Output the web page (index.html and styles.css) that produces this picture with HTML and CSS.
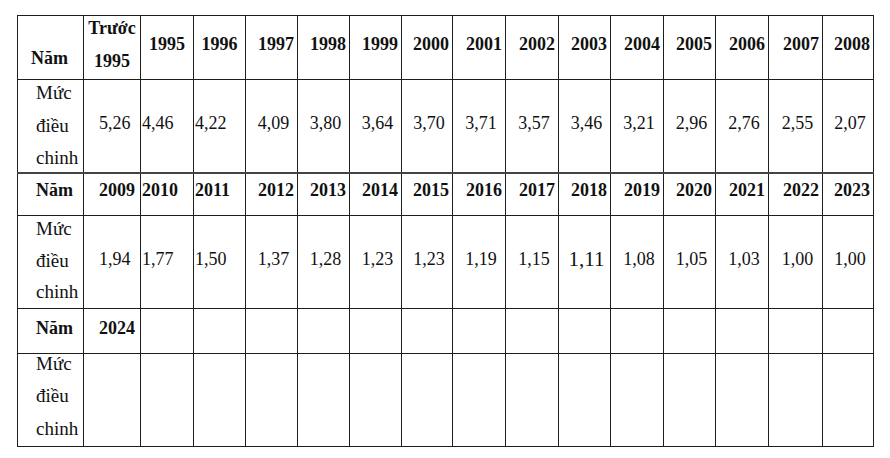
FILE: index.html
```html
<!DOCTYPE html>
<html lang="vi">
<head>
<meta charset="utf-8">
<title>Mức điều chỉnh</title>
<link rel="stylesheet" href="styles.css">
</head>
<body>
<table class="grid">
  <colgroup>
    <col class="w66"><col class="w57"><col class="w53"><col class="w52"><col class="w52"><col class="w52"><col class="w52"><col class="w51"><col class="w53"><col class="w53"><col class="w52"><col class="w53"><col class="w52"><col class="w53"><col class="w54"><col class="w51">
  </colgroup>
  <tr class="row-h1">
    <th class="label first-label">Năm</th>
    <th class="two-line"><div class="stack">Trước<br>1995</div></th>
    <th class="yr ctr">1995</th>
    <th class="yr ctr">1996</th>
    <th class="yr">1997</th>
    <th class="yr">1998</th>
    <th class="yr">1999</th>
    <th class="yr">2000</th>
    <th class="yr">2001</th>
    <th class="yr">2002</th>
    <th class="yr">2003</th>
    <th class="yr">2004</th>
    <th class="yr">2005</th>
    <th class="yr">2006</th>
    <th class="yr">2007</th>
    <th class="yr">2008</th>
  </tr>
  <tr class="row-v1">
    <td class="label"><div class="lines">Mức<br>điều<br>chinh</div></td>
    <td class="val pl15">5,26</td>
    <td class="val lft">4,46</td>
    <td class="val lft">4,22</td>
    <td class="val">4,09</td>
    <td class="val">3,80</td>
    <td class="val">3,64</td>
    <td class="val">3,70</td>
    <td class="val">3,71</td>
    <td class="val">3,57</td>
    <td class="val">3,46</td>
    <td class="val">3,21</td>
    <td class="val">2,96</td>
    <td class="val">2,76</td>
    <td class="val">2,55</td>
    <td class="val">2,07</td>
  </tr>
  <tr class="row-h2">
    <th class="label">Năm</th>
    <th class="yr pl15">2009</th>
    <th class="yr lft">2010</th>
    <th class="yr lft">2011</th>
    <th class="yr">2012</th>
    <th class="yr">2013</th>
    <th class="yr">2014</th>
    <th class="yr">2015</th>
    <th class="yr">2016</th>
    <th class="yr">2017</th>
    <th class="yr">2018</th>
    <th class="yr">2019</th>
    <th class="yr">2020</th>
    <th class="yr">2021</th>
    <th class="yr">2022</th>
    <th class="yr">2023</th>
  </tr>
  <tr class="row-v2">
    <td class="label"><div class="lines">Mức<br>điều<br>chinh</div></td>
    <td class="val pl15">1,94</td>
    <td class="val lft">1,77</td>
    <td class="val lft">1,50</td>
    <td class="val">1,37</td>
    <td class="val">1,28</td>
    <td class="val">1,23</td>
    <td class="val">1,23</td>
    <td class="val">1,19</td>
    <td class="val">1,15</td>
    <td class="val"><span class="big">1,11</span></td>
    <td class="val">1,08</td>
    <td class="val">1,05</td>
    <td class="val">1,03</td>
    <td class="val">1,00</td>
    <td class="val">1,00</td>
  </tr>
  <tr class="row-h3">
    <th class="label">Năm</th>
    <th class="yr pl15">2024</th>
    <th></th><th></th><th></th><th></th><th></th><th></th><th></th><th></th><th></th><th></th><th></th><th></th><th></th><th></th>
  </tr>
  <tr class="row-v3">
    <td class="label"><div class="lines">Mức<br>điều<br>chinh</div></td>
    <td></td><td></td><td></td><td></td><td></td><td></td><td></td><td></td><td></td><td></td><td></td><td></td><td></td><td></td><td></td>
  </tr>
</table>
</body>
</html>
```

FILE: styles.css
```css
html, body {
  margin: 0;
  padding: 0;
  background: #ffffff;
}

body {
  padding: 15px 0 0 17px;
  font-family: "Liberation Serif", "Times New Roman", serif;
  color: #111111;
}

.grid {
  border-collapse: collapse;
  table-layout: fixed;
  width: 857px;
  font-family: "Liberation Serif", "Times New Roman", serif;
  font-size: 18px;
}

.w51 { width: 51px; }
.w52 { width: 52px; }
.w53 { width: 53px; }
.w54 { width: 54px; }
.w57 { width: 57px; }
.w66 { width: 66px; }

.grid th,
.grid td {
  border: 1px solid #1e1e1e;
  padding: 0;
  overflow: visible;
  white-space: nowrap;
  vertical-align: middle;
  font-family: "Liberation Serif", "Times New Roman", serif;
  font-size: 18px;
}

.grid th {
  font-weight: bold;
}

.row-h1 { height: 64px; }
.row-v1 { height: 92px; }
.row-h2 { height: 43px; }
.row-v2 { height: 91px; }
.row-h3 { height: 45px; }
.row-v3 { height: 93px; }

.row-v1 td {
  border-bottom: 2px solid #444444;
}

.grid .label {
  text-align: left;
  padding-left: 18px;
}

.grid td.label {
  font-size: 19px;
}

.grid .first-label {
  vertical-align: bottom;
  padding-left: 13px;
  padding-bottom: 10px;
}

.lines {
  font-weight: normal;
  line-height: 32.5px;
  margin: -3px 0;
}

.row-v2 .lines {
  line-height: 31.5px;
  margin: -3px 0 0;
}

.row-v3 .lines {
  margin: -6px 0 0;
}

.grid .two-line {
  vertical-align: top;
  text-align: center;
}

.stack {
  line-height: 33px;
  margin: -4px 0 -2px;
}

.grid .yr {
  text-align: right;
  padding-right: 3px;
}

.grid .row-h1 .yr {
  padding-bottom: 7px;
}

.grid .row-h2 .yr,
.grid .row-h2 .label {
  padding-bottom: 7px;
}

.grid .row-h3 .yr,
.grid .row-h3 .label {
  padding-bottom: 4px;
}

.grid .yr.ctr {
  text-align: center;
  padding-right: 0;
}

.grid .val {
  text-align: center;
  padding-left: 4px;
  padding-bottom: 5px;
}

.grid .lft {
  text-align: left;
  padding-left: 1px;
  padding-right: 0;
}

.grid .pl15 {
  text-align: left;
  padding-left: 15px;
  padding-right: 0;
}

.big {
  font-size: 21px;
}
```
